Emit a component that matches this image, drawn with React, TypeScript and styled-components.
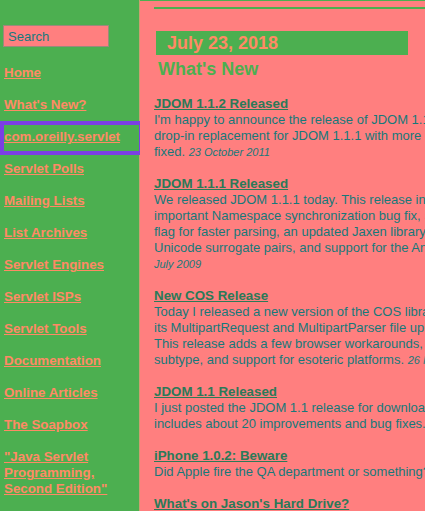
import React from "react";
import styled, { createGlobalStyle } from "styled-components";

const Global = createGlobalStyle`
  html, body { margin: 0; padding: 0; overflow: hidden; background: #ff7f7f; }
  body { font-family: "Liberation Sans", Arial, sans-serif; font-size: 13px; }
`;

const Page = styled.div`
  display: flex;
  align-items: stretch;
  width: 425px;
  height: 511px;
  overflow: hidden;
`;

const Sidebar = styled.nav`
  flex: 0 0 135px;
  background: #4caf50;
  border-right: 1px solid #c9a070;
  padding: 25px 0 0 4px;
  display: block;
`;

const Search = styled.input`
  display: block;
  box-sizing: border-box;
  margin: 0 0 0 -1px;
  width: 106px;
  height: 22px;
  background: #ff7f7f;
  border: 1px solid #9a8a7a;
  padding: 0 4px;
  font-family: "Liberation Sans", Arial, sans-serif;
  font-size: 13px;
  color: #137a7e;
  &::placeholder { color: #137a7e; opacity: 1; }
  outline: none;
`;

const LinkList = styled.ul`
  list-style: none;
  margin: 18px 0 0;
  padding: 0;
`;

const LinkItem = styled.li<{ $focused?: boolean }>`
  padding: ${(p) => (p.$focused ? "4px 0 6px" : "0")};
  margin-top: ${(p) => (p.$focused ? "-4px" : "0")};
  margin-bottom: ${(p) => (p.$focused ? "10px" : "16px")};
  outline: ${(p) => (p.$focused ? "4px solid #7b3fe4" : "none")};
  line-height: 16px;
`;

const SideLink = styled.a`
  color: #ff8a65;
  font-weight: bold;
  font-size: 13.33px;
  text-decoration: underline;
`;

const Main = styled.main`
  flex: 1 0 auto;
  background: #ff7f7f;
  border-top: 1px solid #4caf50;
  padding-left: 14px;
  min-width: 0;
`;

const Rule = styled.div`
  height: 2px;
  margin-top: 6px;
  width: 400px;
  background: #4caf50;
`;

const DateBox = styled.div`
  margin: 22px 0 0 2px;
  width: 252px;
  height: 24px;
  background: #4caf50;
  box-sizing: border-box;
  padding-left: 11px;
  color: #ff8a65;
  font-weight: bold;
  font-size: 18px;
  line-height: 25px;
`;

const SectionTitle = styled.h2`
  margin: 3px 0 0 4px;
  color: #4caf50;
  font-size: 18px;
  line-height: 22px;
  font-weight: bold;
`;

const News = styled.div`
  margin-top: 16px;
  width: 392px;
  line-height: 16px;
`;

const Item = styled.div`
  margin-bottom: 16px;
`;

const Headline = styled.a`
  display: block;
  color: #2b7a58;
  font-weight: bold;
  font-size: 13.33px;
  text-decoration: underline;
`;

const Body = styled.div`
  color: #16797a;
  font-size: 13px;
  white-space: nowrap;
`;

const When = styled.span`
  font-style: italic;
  font-size: 11px;
`;

const links = [
  "Home",
  "What's New?",
  "com.oreilly.servlet",
  "Servlet Polls",
  "Mailing Lists",
  "List Archives",
  "Servlet Engines",
  "Servlet ISPs",
  "Servlet Tools",
  "Documentation",
  "Online Articles",
  "The Soapbox",
];

type NewsItem = { title: string; lines: string[]; date?: string; dateOwnLine?: boolean };

const news: NewsItem[] = [
  {
    title: "JDOM 1.1.2 Released",
    lines: [
      "I'm happy to announce the release of JDOM 1.1.2. It's a",
      "drop-in replacement for JDOM 1.1.1 with more than a dozen bugs",
      "fixed.",
    ],
    date: "23 October 2011",
  },
  {
    title: "JDOM 1.1.1 Released",
    lines: [
      "We released JDOM 1.1.1 today. This release includes an",
      "important Namespace synchronization bug fix, a new reuse",
      "flag for faster parsing, an updated Jaxen library, support for",
      "Unicode surrogate pairs, and support for the Android platform.",
    ],
    date: "July 2009",
    dateOwnLine: true,
  },
  {
    title: "New COS Release",
    lines: [
      "Today I released a new version of the COS library, including",
      "its MultipartRequest and MultipartParser file upload classes.",
      "This release adds a few browser workarounds, a new content",
      "subtype, and support for esoteric platforms.",
    ],
    date: "26 November 2009",
  },
  {
    title: "JDOM 1.1 Released",
    lines: [
      "I just posted the JDOM 1.1 release for download. This release",
      "includes about 20 improvements and bug fixes.",
    ],
  },
  {
    title: "iPhone 1.0.2: Beware",
    lines: ["Did Apple fire the QA department or something?"],
  },
  {
    title: "What's on Jason's Hard Drive?",
    lines: ["A look at the tools and software I use every day."],
  },
];

export default function App() {
  return (
    <>
      <Global />
      <Page>
        <Sidebar>
          <Search placeholder="Search" />
          <LinkList>
            {links.map((l) => (
              <LinkItem key={l} $focused={l === "com.oreilly.servlet"}>
                <SideLink href="#">{l}</SideLink>
              </LinkItem>
            ))}
            <LinkItem>
              <SideLink href="#">
                "Java Servlet
                <br />
                Programming,
                <br />
                Second Edition"
              </SideLink>
            </LinkItem>
          </LinkList>
        </Sidebar>
        <Main>
          <Rule />
          <DateBox>July 23, 2018</DateBox>
          <SectionTitle>What's New</SectionTitle>
          <News>
            {news.map((n) => (
              <Item key={n.title}>
                <Headline href="#">{n.title}</Headline>
                {n.lines.map((line, i) => (
                  <Body key={i}>
                    {line}
                    {i === n.lines.length - 1 && n.date && !n.dateOwnLine && (
                      <>
                        {" "}
                        <When>{n.date}</When>
                      </>
                    )}
                  </Body>
                ))}
                {n.date && n.dateOwnLine && (
                  <Body>
                    <When>{n.date}</When>
                  </Body>
                )}
              </Item>
            ))}
          </News>
        </Main>
      </Page>
    </>
  );
}
